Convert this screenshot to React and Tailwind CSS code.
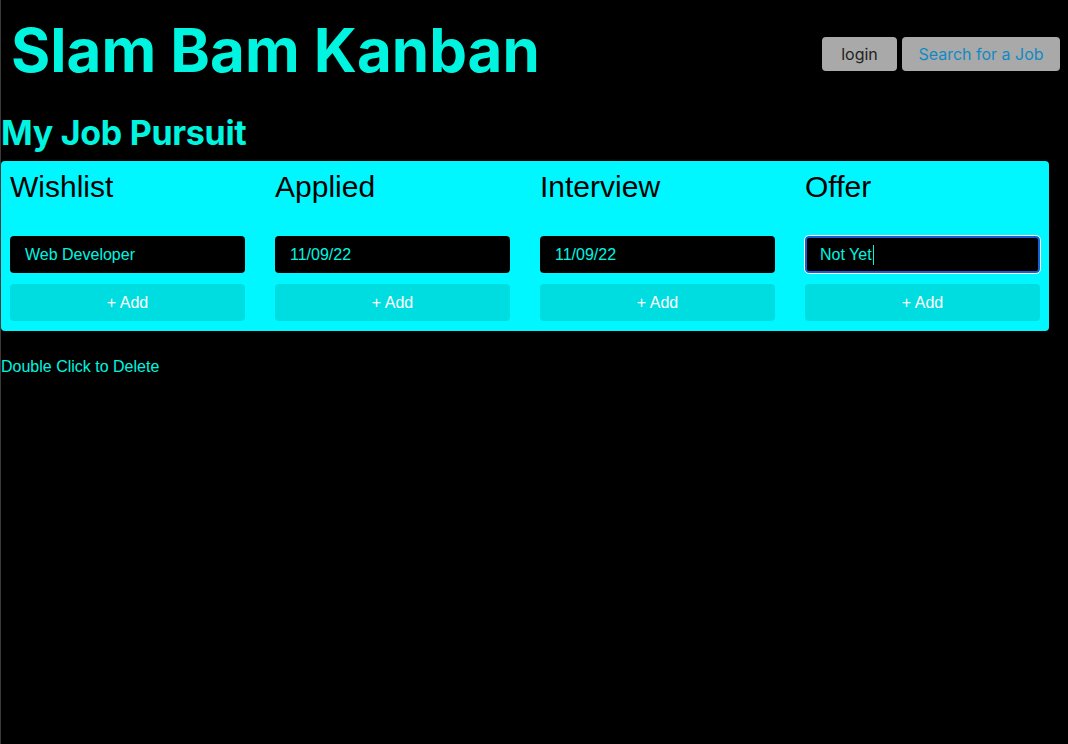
import React from "react";

const cols = [
  { title: "Wishlist", value: "Web Developer" },
  { title: "Applied", value: "11/09/22" },
  { title: "Interview", value: "11/09/22" },
  { title: "Offer", value: "Not Yet", focused: true },
];

export default function App() {
  return (
    <div className="min-h-[744px] w-[1068px] bg-black border-l border-[#3a3a3a]" style={{ fontFamily: "'Liberation Sans', Arial, sans-serif" }}>
      <header className="flex items-start justify-between pr-[8px]">
        <h1
          className="pl-[10px] pt-[14px] text-[60px] leading-[72px] font-bold text-[#00f5e0]"
          style={{ fontFamily: "Inter, sans-serif" }}
        >
          Slam Bam Kanban
        </h1>
        <div className="flex gap-[5px] mt-[37px]">
          <button className="h-[34px] w-[75px] rounded-[4px] bg-[#a9a9a9] text-[16px] text-[#222]" style={{ fontFamily: "Inter, sans-serif" }}>
            login
          </button>
          <button className="h-[34px] w-[158px] rounded-[4px] bg-[#a9a9a9] text-[16px] text-[#1189c4]" style={{ fontFamily: "Inter, sans-serif" }}>
            Search for a Job
          </button>
        </div>
      </header>
      <h2 className="mt-[27px] text-[34px] leading-[40px] font-bold text-[#00f5e0] tracking-[-0.3px]" style={{ fontFamily: "Inter, sans-serif" }}>
        My Job Pursuit
      </h2>
      <div className="mt-[8px] w-[1048px] rounded-[4px] bg-[#00f7ff] px-[9px] pt-[8px] pb-[10px] grid grid-cols-4 gap-[30px]">
        {cols.map((c) => (
          <div key={c.title} className="flex flex-col">
            <div className="text-[30px] leading-[36px] text-black h-[67px]">{c.title}</div>
            <div
              className={
                "h-[37px] rounded-[4px] bg-black flex items-center text-[16px] text-[#00f5e0] " +
                (c.focused ? "pl-[13px] border-2 border-[#1a5fd0] outline outline-1 outline-white" : "pl-[15px]")
              }
            >
              {c.value}
              {c.focused && <span className="inline-block w-[1px] h-[20px] bg-[#00f5e0] ml-[1px]" />}
            </div>
            <button className="mt-[11px] h-[37px] rounded-[4px] bg-[#00dde0] text-[16px] text-white">+ Add</button>
          </div>
        ))}
      </div>
      <p className="mt-[24px] text-[16px] text-[#00f5e0]">Double Click to Delete</p>
    </div>
  );
}
